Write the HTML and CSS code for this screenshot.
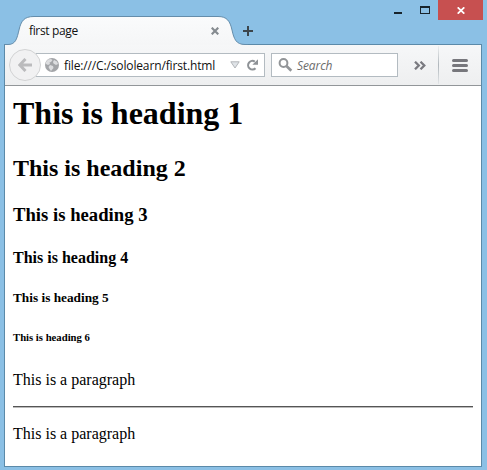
FILE: index.html
```html
<!DOCTYPE html>
<html lang="en">
<head>
<meta charset="utf-8">
<title>first page</title>
<link rel="stylesheet" href="styles.css">
</head>
<body>
<div class="window">
  <header class="tabstrip">
    <div class="tab">
      <svg class="tab-shape" width="244" height="30" viewBox="0 0 244 30">
        <defs><linearGradient id="tabfill" x1="0" y1="0" x2="0" y2="1"><stop offset="0" stop-color="#fafbfc"/><stop offset="1" stop-color="#f5f6f7"/></linearGradient></defs>
        <path d="M1 30V29.500H4C12 29.500 13 23 15 15C17 6 20 1.500 30 1.500H214C223 1.500 226 6 228 15C230 24 232 29.500 241 29.500V30Z" fill="url(#tabfill)"/>
        <path d="M0 29.500H4C12 29.500 13 23 15 15C17 6 20 1.500 30 1.500H214C223 1.500 226 6 228 15C230 24 232 29.500 241 29.500H244" fill="none" stroke="#648dab"/>
      </svg>
      <span class="tab-title">first page</span>
      <svg class="tab-close" width="8" height="8" viewBox="0 0 8 8"><path d="M.7 .7L7.300 7.300M7.300 .7L.7 7.300" stroke="#858b90" stroke-width="2.200"/></svg>
    </div>
    <svg class="tab-new" width="10" height="10" viewBox="0 0 10 10"><path d="M5 0V10M0 5H10" stroke="#3b454c" stroke-width="2"/></svg>
    <div class="controls">
      <svg class="minimize" width="8" height="2" viewBox="0 0 8 2"><path d="M0 1H8" stroke="#18242c" stroke-width="2"/></svg>
      <svg class="maximize" width="10" height="8" viewBox="0 0 10 8"><path d="M.5 0V8M9.500 0V8M0 7.500H10" stroke="#18242c"/><path d="M0 1H10" stroke="#18242c" stroke-width="2"/></svg>
      <div class="close"><svg width="8" height="7" viewBox="0 0 8 7"><path d="M.7 .3L7.300 6.700M7.300 .3L.7 6.700" stroke="#fff" stroke-width="1.700"/></svg></div>
    </div>
  </header>
  <div class="frame">
    <nav class="toolbar">
      <div class="back"><svg width="14" height="14" viewBox="0 0 14 14"><path d="M7.500 1L1.800 7L7.500 13M2 7H14" fill="none" stroke="#bbbbbd" stroke-width="3"/></svg></div>
      <div class="address">
        <svg class="globe" width="14" height="14" viewBox="0 0 14 14"><circle cx="7" cy="7" r="7" fill="#a3a5a8"/><path d="M1 4L3 1.500L6 1L7.500 2L6 4L4.500 4.500L5 6L3 7L1 6ZM9 2L12 3.500L13 6L11 7L8.500 5.500L8 4ZM5 7L8 8L8.500 10L6 13L4.500 11L3.500 9Z" fill="#dcdddf"/></svg>
        <span class="url">file:///C:/sololearn/first.html</span>
        <svg class="dropdown" width="10" height="8" viewBox="0 0 10 8"><path d="M.8 .8H9.200L5 7Z" fill="#dfe3e7" stroke="#b2b5b9"/></svg>
        <svg class="reload" width="13" height="12" viewBox="0 0 13 12"><path d="M9.500 9.200A4.300 4.300 0 1 1 8.800 2.600" fill="none" stroke="#8e9296" stroke-width="2.100"/><path d="M12 .2V5.700H6.400Z" fill="#8e9296"/></svg>
      </div>
      <div class="search">
        <svg width="15" height="14" viewBox="0 0 15 14"><circle cx="5.500" cy="5" r="3.900" fill="none" stroke="#929598" stroke-width="2"/><path d="M8.500 8L13.300 12.700" stroke="#929598" stroke-width="2.700"/></svg>
        <span class="hint">Search</span>
      </div>
      <svg class="overflow" width="12" height="9" viewBox="0 0 12 9"><path d="M1 .7L4.800 4.500L1 8.300M6.500 .7L10.300 4.500L6.500 8.300" fill="none" stroke="#7a7a80" stroke-width="2.300"/></svg>
      <div class="divider"></div>
      <svg class="menu" width="16" height="13" viewBox="0 0 16 13"><path d="M1.500 1.500H14.500M1.500 6.500H14.500M1.500 11.500H14.500" stroke="#77777c" stroke-width="3" stroke-linecap="round"/></svg>
    </nav>
    <main class="page">
      <h1>This is heading 1</h1>
      <h2>This is heading 2</h2>
      <h3>This is heading 3</h3>
      <h4>This is heading 4</h4>
      <h5>This is heading 5</h5>
      <h6>This is heading 6</h6>
      <p>This is a paragraph</p>
      <hr>
      <p>This is a paragraph</p>
    </main>
  </div>
</div>
</body>
</html>
```
FILE: styles.css
```css
* { box-sizing: border-box; }
body { margin: 0; }
svg { display: block; flex: none; }
.window {
  width: 487px;
  height: 470px;
  padding: 0 5px 3px 4px;
  background: #8bc0e5;
  overflow: hidden;
  font-family: "Open Sans", "Noto Sans", sans-serif;
  font-size: 12px;
  color: #111;
}
.tabstrip {
  display: flex;
  height: 44px;
}
.tab {
  position: relative;
  z-index: 1;
  display: flex;
  width: 239px;
  height: 30px;
  margin-top: 15px;
  padding-left: 25px;
}
.tab-shape {
  position: absolute;
  left: 0;
  top: 0;
}
.tab-title {
  position: relative;
  width: 182px;
  line-height: 32px;
  letter-spacing: -0.35px;
}
.tab-close { position: relative; margin-top: 12px; }
.tab-new { margin-top: 26px; }
.controls {
  display: flex;
  margin-left: auto;
  margin-right: -1px;
}
.minimize { margin: 12px 18px 0 0; }
.maximize { margin: 6px 8px 0 0; }
.close {
  display: flex;
  width: 45px;
  height: 20px;
  padding-top: 1px;
  align-items: center;
  justify-content: center;
  background: #c75050;
}
.frame {
  height: 423px;
  border: 1px solid #5b8aa9;
  background: #fff;
}
.toolbar {
  display: flex;
  height: 41px;
  align-items: center;
  background: linear-gradient(#f6f7f8, #eeeff0);
  border-bottom: 1px solid #929699;
}
.back {
  position: relative;
  z-index: 1;
  display: flex;
  width: 32px;
  height: 32px;
  margin-left: 4px;
  align-items: center;
  justify-content: center;
  border: 1px solid #d2d3d4;
  border-radius: 50%;
  background: #f1f1f2;
}
.address, .search {
  display: flex;
  height: 24px;
  align-items: center;
  background: #fff;
  border: 1px solid #b3bbc1;
}
.address {
  width: 229px;
  margin-left: -5px;
  padding-left: 9px;
  border-left: 0;
}
.url {
  width: 166px;
  margin-left: 5px;
  letter-spacing: -0.14px;
  white-space: nowrap;
}
.reload { margin-left: 6px; }
.search {
  width: 127px;
  margin-left: 6px;
  padding-left: 6px;
}
.hint {
  margin-left: 4px;
  font-style: italic;
  letter-spacing: -0.1px;
  color: #6d6d6d;
}
.overflow { margin-left: 16px; }
.divider {
  width: 1px;
  height: 38px;
  margin: 0 13px 0 12px;
  background: linear-gradient(#eceeef, #b0b7bc 50%, #e2e5e7);
}
.page {
  padding: 9px 8px 0 8px;
  font-family: "Liberation Serif", serif;
  color: #000;
}
h1, h2, h3, h4, h5, h6, p { margin: 0; white-space: nowrap; }
h1 { font-size: 32px; line-height: 36px; }
h2 { margin-top: 23px; font-size: 24px; line-height: 28px; }
h3 { margin-top: 22px; font-size: 18.700px; line-height: 22px; }
h4 { margin-top: 23px; font-size: 16px; line-height: 18px; }
h5 { margin-top: 23px; font-size: 13.300px; line-height: 16px; }
h6 { margin-top: 25px; font-size: 10.700px; line-height: 12px; }
p { margin-top: 28px; font-size: 16px; line-height: 18px; }
hr {
  height: 2px;
  margin: 17px 0;
  border: 0;
  border-top: 1px solid #555;
  border-bottom: 1px solid #bbb;
}
hr + p { margin-top: 0; }
```
